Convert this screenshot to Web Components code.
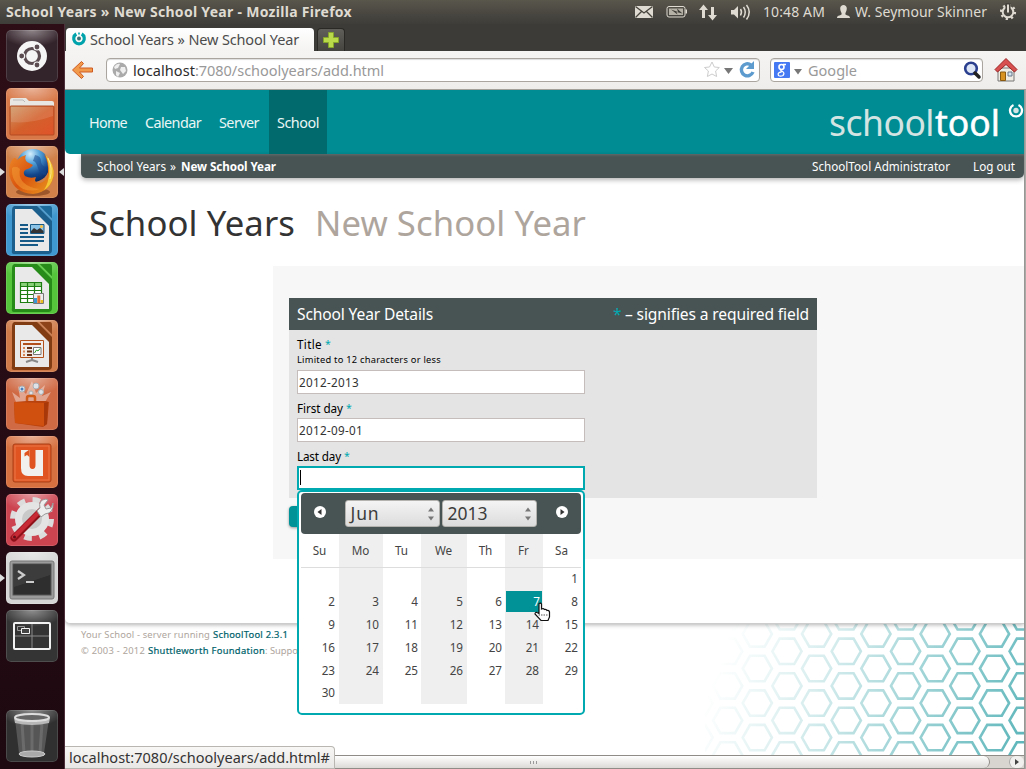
<!DOCTYPE html>
<html lang="en">
<head>
<meta charset="utf-8">
<title>School Years » New School Year</title>
<style>
html,body{margin:0;padding:0}
body{width:1026px;height:769px;overflow:hidden;background:#fff;font-family:"Noto Sans","Open Sans",sans-serif}
</style>
</head>
<body>
<desktop-shell>
  <top-panel slot="panel"></top-panel>
  <app-launcher slot="launcher"></app-launcher>
  <browser-window slot="window">
    <school-page></school-page>
  </browser-window>
</desktop-shell>
<script>
const define = (name, html, init) => {
  const t = document.createElement('template');
  t.innerHTML = html;
  customElements.define(name, class extends HTMLElement {
    connectedCallback() {
      if (this.shadowRoot) return;
      this.attachShadow({mode: 'open'}).appendChild(t.content.cloneNode(true));
      if (init) init.call(this, this.shadowRoot);
    }
  });
};

/* Text run that spreads its letters over a given width. */
define('fit-text', `<style>:host{display:inline-block;white-space:pre;flex:none}span{display:inline-block}</style><span><slot></slot></span>`,
function (root) {
  const w = +this.getAttribute('w'), span = root.querySelector('span');
  const nat = span.getBoundingClientRect().width;
  span.style.letterSpacing = ((w - nat) / Math.max(1, this.textContent.length)) + 'px';
  this.style.width = w + 'px';
});

define('desktop-shell', `<style>
:host{display:grid;grid-template:24px 745px/65px 961px;width:1026px;height:769px;overflow:hidden}
slot[name=panel]{display:block;grid-column:1/3}
slot{display:block;min-width:0;min-height:0}
</style><slot name="panel"></slot><slot name="launcher"></slot><slot name="window"></slot>`);

define('top-panel', `<style>
:host{display:flex;box-sizing:border-box;height:24px;align-items:center;padding-left:6px;background:linear-gradient(#59574c,#4a4841 50%,#3f3d39);color:#dfdbd2;font-size:14px;line-height:24px}
b{margin-right:283px}svg{flex:none;display:block}
</style>
<b><fit-text w="346">School Years » New School Year - Mozilla Firefox</fit-text></b>
<svg width="128" height="24" viewBox="635 0 128 24" fill="#dfdbd2">
<path d="M635 6h18v12h-18z"/><path d="M635.5 6.5l8.500 6.500 8.500-6.500M635.5 17.500l6-6M652.500 17.500l-6-6" fill="none" stroke="#45433c" stroke-width="1.300"/>
<rect x="667" y="6.500" width="18" height="10.500" rx="2" fill="none" stroke="#dfdbd2"/><rect x="669" y="8.500" width="14" height="6.500" fill="#b5b1a7"/><path d="M685.500 9.500h1.500v4h-1.500z"/><path d="M671 9.500l7 2.500-1-3.500 5.500 5-6-1.500 1 2.500z" fill="#3d3b36"/>
<path d="M703.500 4.500l4.500 5.500h-3v8h-3v-8h-3zM712.500 20.500l4.500-5.500h-3V7h-3v8h-3z"/>
<path d="M731 10h3l4-4v12.500l-4-4h-3z"/><path d="M740.500 9q2 3 0 6.500M743.500 7q3.500 5 0 10.500M746.500 5q5.500 7 0 14.500" fill="none" stroke="#dfdbd2" stroke-width="1.500"/>
</svg>
<fit-text w="62">10:48 AM</fit-text>
<svg style="margin:0 5px 0 12px" width="13" height="24" viewBox="0 0 13 24" fill="#dfdbd2"><path d="M3.200 8.500C3 3.800 10 3.800 9.800 8.500 9.800 11 8.500 12 8.300 14c0 1.500 4.700 1 4.700 4H0c0-3 4.700-2.500 4.700-4C4.500 12 3.200 11 3.200 8.500z"/></svg>
<fit-text w="132">W. Seymour Skinner</fit-text>
<svg style="margin-left:13px" width="18" height="24" viewBox="0 0 18 24" fill="none" stroke="#dfdbd2"><circle cx="8" cy="12" r="5.300" stroke-width="2"/><circle cx="8" cy="12" r="7" stroke-width="2.200" stroke-dasharray="2.200 3.300"/><path d="M8 3v9" stroke="#45433c" stroke-width="5"/><path d="M8 4.500v8" stroke-width="2"/></svg>`);

define('launcher-tile', `<style>
:host{display:block;position:relative;width:52px;height:52px;border-radius:5px;box-sizing:border-box;box-shadow:inset 0 0 0 1px rgba(255,255,255,.13);background-image:radial-gradient(ellipse 32px 17px at 50% 0,rgba(255,255,255,.45),rgba(255,255,255,0));flex:none}
i{display:none;position:absolute;top:22px;border:4px solid transparent}
:host([running]) .l{display:block;left:-6px;border-left:5px solid #ddd;border-right:0}
:host([active]) .r{display:block;right:-6px;border-right:5px solid #ddd;border-left:0}
</style><slot></slot><i class="l"></i><i class="r"></i>`);

define('app-launcher', `<style>
:host{display:flex;flex-direction:column;gap:6px;width:65px;height:745px;box-sizing:border-box;padding:6px 0 0 6px;background:linear-gradient(#2d0e17,#250b14 60%,#1e0910);border-right:1px solid #4c2f3b}
svg{display:block;width:52px;height:52px}
.trash{margin-top:42px}
</style>
<launcher-tile style="background-color:#33232a"><svg viewBox="0 0 52 52"><circle cx="26" cy="26" r="15" fill="#f5f5f5"/><circle cx="26" cy="26" r="7.500" fill="none" stroke="#5a4b50" stroke-width="3.200"/><g stroke="#f5f5f5" stroke-width="1.200" fill="#5a4b50"><circle cx="15.700" cy="26" r="3"/><circle cx="31" cy="17" r="3"/><circle cx="31" cy="35" r="3"/></g></svg></launcher-tile>
<launcher-tile style="background-color:#d87848"><svg viewBox="0 0 52 52"><defs><linearGradient id="f" x1="0" y1="0" x2="1" y2="1"><stop stop-color="#cf9a68"/><stop offset=".5" stop-color="#d3602c"/><stop offset="1" stop-color="#e0532a"/></linearGradient></defs><path d="M4 18v-6q0-2 2-2h14l3 3h23q2 0 2 2v3z" fill="#e9e7e3"/><path d="M7 12h10l2 2" stroke="#bbb" fill="none"/><rect x="4" y="18" width="44" height="29" rx="1" fill="url(#f)" stroke="#b34b22"/><path d="M5 19h42v9Q25 36 5 34z" fill="#fff" opacity=".12"/></svg></launcher-tile>
<launcher-tile running active style="background-color:#d08048"><svg viewBox="0 0 52 52"><defs><radialGradient id="g" cx=".42" cy=".15" r=".85"><stop stop-color="#d5effc"/><stop offset=".35" stop-color="#4f9fd8"/><stop offset=".75" stop-color="#13468c"/><stop offset="1" stop-color="#0b2a62"/></radialGradient><linearGradient id="x" x1="0" y1="0" x2="1" y2=".8"><stop stop-color="#ee8a28"/><stop offset=".5" stop-color="#d9540f"/><stop offset="1" stop-color="#e8911e"/></linearGradient></defs><ellipse cx="27" cy="46" rx="17" ry="4" fill="#7a3b18" opacity=".6"/><circle cx="27" cy="19.500" r="16.500" fill="url(#g)"/><path d="M29 9q6 1 6 6t5 6v8q-6 0-8-7t-5-7z" fill="#16468a" opacity=".55"/><path d="M6 14Q9 10 11 14 15 10 20 9 18 13 21 16L27 19Q25 22 20 23.500 16 26 19 30 24 33 30 31 27 37 34 37 41 35 42 27 43 17 38 8 48 17 48 29 45 46 27 48 8 47 3.500 30 2 20 6 14z" fill="url(#x)"/><path d="M39 8Q49 19 47.500 30 45 40 38 44 43 36 43 27 43 16 39 8z" fill="#f3c535"/><path d="M42 12q5 10 2 21" stroke="#fbe68a" fill="none"/><path d="M6 22Q5 36 17 43 26 46 34 43 23 42 17 36 12 30 14 23 10 19 6 22z" fill="#f39a35" opacity=".55"/></svg></launcher-tile>
<launcher-tile style="background-color:#3f98cf"><svg viewBox="0 0 52 52"><path d="M8 2h34q4 1 4 6v38q0 4-4 4H8q-3 0-2-4V6q0-3 2-4z" fill="#1c5e8c"/><path d="M9 5h17l17 17v25H9z" fill="#e9e9e9"/><path d="M31 2h3l12 12v3z" fill="#63b1df" opacity=".75"/><path d="M34 2h10q2 0 2 3v9z" fill="#1c6a9c"/><path d="M14 21h8M14 25h8M14 29h8M14 33h24M14 37h24M14 41h18" stroke="#175a88" stroke-width="2"/><path d="M24.500 20.500h13.500v9h-13.500z" fill="#8bc4e6" stroke="#175a88"/><path d="M25 29v-2l3-3 3 2 3-2 3.500 3v2z" fill="#333"/><circle cx="35.500" cy="22.500" r="1.500" fill="#ffc13d"/></svg></launcher-tile>
<launcher-tile style="background-color:#55c53c"><svg viewBox="0 0 52 52"><path d="M8 2h34q4 1 4 6v38q0 4-4 4H8q-3 0-2-4V6q0-3 2-4z" fill="#268b18"/><path d="M9 5h17l17 17v25H9z" fill="#e9e9e9"/><path d="M31 2h3l12 12v3z" fill="#7be060" opacity=".75"/><path d="M34 2h10q2 0 2 3v9z" fill="#268b18"/><path d="M14.500 20.500h21v20h-21z" fill="#fff"/><path d="M14 20h22v4H14z" fill="#8ad07b"/><path d="M14.500 20.500h21v20h-21zM14 24.500h22M14 28.500h22M14 32.500h22M14 36.500h22M21.500 20v20M28.500 20v20" fill="none" stroke="#1d7d13" stroke-width="1.200"/><path d="M27.500 31.500h10v10h-10z" fill="#eee" stroke="#777"/><path d="M28 36h3v5h-3z" fill="#3898d4"/><path d="M31.300 33.500h3V41h-3z" fill="#e07030"/><path d="M34.600 38h2.500v3h-2.500z" fill="#e8c020"/></svg></launcher-tile>
<launcher-tile style="background-color:#cf7a48"><svg viewBox="0 0 52 52"><path d="M8 2h34q4 1 4 6v38q0 4-4 4H8q-3 0-2-4V6q0-3 2-4z" fill="#823c14"/><path d="M9 5h17l17 17v25H9z" fill="#e9e9e9"/><path d="M31 2h3l12 12v3z" fill="#dd9468" opacity=".75"/><path d="M34 2h10q2 0 2 3v9z" fill="#8e4418"/><path d="M14.500 20.500h23v17h-23z" fill="#f2ece8" stroke="#b2501c"/><path d="M17 24h18" stroke="#b2501c" stroke-width="2"/><path d="M17 28h2M17 31.500h2M17 35h2" stroke="#d88858" stroke-width="2"/><path d="M21 28h5M21 31.500h5M21 35h5" stroke="#6b3213" stroke-width="2"/><path d="M27.500 27.500h7.500v7h-7.500z" fill="#fff" stroke="#777"/><path d="M28.500 33l2-3 1.500 1 2-2.500" stroke="#2a9a2a" fill="none"/><path d="M26 38v2l-6 2M26 40l6 2" stroke="#888" stroke-width="2" fill="none"/></svg></launcher-tile>
<launcher-tile style="background-color:#cf6a45"><svg viewBox="0 0 52 52"><path d="M10 24L6 14l8 6-2-12 8 8 6-13 4 12 9-8-3 11 9-4-6 10z" fill="#fff" opacity=".4"/><g fill="#dfe3e8" stroke="#a9b0b5"><circle cx="16" cy="11" r="3"/><circle cx="30" cy="8" r="3"/><circle cx="35" cy="14" r="2.500"/><circle cx="25" cy="15" r="2"/></g><circle cx="16" cy="11" r="1.500" fill="#4a7fc0"/><path d="M8 24l13-1h19l3 1-2 22-4 3-28-4z" fill="#b8420e"/><path d="M8 24l30 1v23L9 45z" fill="#d0500f"/><path d="M38 25l4-1-1 22-3 2z" fill="#a8380a"/><path d="M21 23v-3q0-2 2-2h4q2 0 2 2v3" fill="none" stroke="#d05a18" stroke-width="2.500"/></svg></launcher-tile>
<launcher-tile style="background-color:#d77040"><svg viewBox="0 0 52 52"><rect x="7" y="8" width="38" height="38" rx="2" fill="#df5420" stroke="#a84018"/><rect x="9" y="10" width="34" height="34" fill="none" stroke="#eb7748"/><path d="M15 14h8.500v15q0 4 3 4t3-4V14H37v26H22q-7 0-7-8z" fill="#f2f0ee"/><path d="M18.500 17l5-3.500V21l-2.500-2-2.500 1.500z" fill="#df5420"/></svg></launcher-tile>
<launcher-tile style="background-color:#cc4450"><svg viewBox="0 0 52 52"><circle cx="26" cy="25" r="19" fill="none" stroke="#dcdcdc" stroke-width="6" stroke-dasharray="7.460 7.460"/><circle cx="26" cy="25" r="13.500" fill="#c9c9c9" stroke="#e4e4e4" stroke-width="7"/><path d="M8 44L35 17" stroke="#8e1019" stroke-width="7" stroke-linecap="round"/><path d="M8 43L34 17" stroke="#c82a35" stroke-width="4.500" stroke-linecap="round"/><path d="M31 17l3-3q-2-8 6-9l2 1-4 5 2 4 5-1 2-5q1 10-8 11l-4 3z" fill="#eee" stroke="#999"/><circle cx="8.500" cy="43" r="1.500" fill="#601018"/></svg></launcher-tile>
<launcher-tile running style="background-color:#d5d5d5"><svg viewBox="0 0 52 52"><rect x="4" y="9" width="44" height="38" rx="2" fill="#9b9b9b" stroke="#777"/><rect x="7" y="12" width="38" height="31" fill="#2e2e2e" stroke="#555"/><path d="M8 13h36v10L8 35z" fill="#fff" opacity=".07"/><path d="M12 19l6 4-6 4M20 30h8" fill="none" stroke="#ccc" stroke-width="2.200"/></svg></launcher-tile>
<launcher-tile style="background-color:#343434"><svg viewBox="0 0 52 52"><path d="M26 13v26M8 26h36" stroke="#8a8a8a"/><rect x="8" y="13" width="36" height="26" rx="1" fill="none" stroke="#f2f2f2" stroke-width="2"/><path d="M11.500 16.500h7v4h-7z" fill="none" stroke="#999"/><path d="M15.500 18.500h8v5h-8z" fill="#444" stroke="#f2f2f2"/></svg></launcher-tile>
<launcher-tile class="trash" style="background-color:#303030"><svg viewBox="0 0 52 52"><path d="M9 9l4 34q13 8 25 0l5-34z" fill="#777" opacity=".55"/><path d="M16 13l2 30M26 14v31M36 13l-2 30" stroke="#aaa" opacity=".25" stroke-width="3"/><ellipse cx="26" cy="44" rx="13" ry="3" fill="#aaa" stroke="#ccc"/><path d="M8 8l1 5q17 4 34 0l1-5q-18 8-36 0z" fill="#b8b8b8"/><ellipse cx="26" cy="7.500" rx="17" ry="3.500" fill="#666" stroke="#ddd" stroke-width="2"/></svg></launcher-tile>`);

define('browser-window', `<style>
:host{display:grid;grid-template:27px 39px 665px 14px/959px 2px;width:961px;height:745px;position:relative;color:#3c3c3c;font-size:14.500px}
.tabs,.tool{grid-column:1/3}
svg{flex:none;display:block}
.tabs{background:#3c3b37;display:flex;align-items:flex-end;padding-left:1px;gap:3px}
.tab{display:flex;align-items:center;gap:3px;width:243px;height:23px;padding-left:5px;border-radius:4px 4px 0 0;background:linear-gradient(#fff,#f4f3f1);color:#4c4c4c}
.tab fit-text{position:relative;top:-1px}
.plus{width:26px;height:22px;border:1px solid #2a2926;border-bottom:0;border-radius:4px 4px 0 0;background:linear-gradient(#605f59,#45443f)}
.tool{display:flex;box-sizing:border-box;background:linear-gradient(#f5f4f2,#efedeb);border-bottom:1px solid #a39f99;padding:7px 0 0 6px;align-items:flex-start}
.box{box-sizing:border-box;height:24px;background:#fff;border:1px solid #aaa69f;border-radius:4px;display:flex;align-items:center;box-shadow:inset 0 1px 1px #ddd}
.edge{background:linear-gradient(90deg,#8e8e8e,#b4b2ae)}
main{overflow:hidden;position:relative;background:#fff}
.scroll{box-sizing:border-box;background:#d8d5d1;border-top:1px solid #8f8c88;border-bottom:1px solid #8f8c88;display:flex;position:relative;align-items:center}
.thumb{width:925px;height:12px;box-sizing:border-box;padding-left:12px;border-right:1px solid #8f8c88;border-radius:0 6px 6px 0;background:linear-gradient(#fff,#dcdad7);display:flex;align-items:center;justify-content:center}
.end{margin-left:19px;flex:1;height:12px;display:flex;align-items:center;justify-content:center;background:#f1f0ee;border-left:1px solid #aaa;border-radius:6px;box-sizing:border-box}
.status{position:absolute;left:0;bottom:0;width:270px;height:23px;box-sizing:border-box;padding-left:4px;line-height:21px;border:1px solid #b9b6b2;border-left:0;border-radius:0 4px 0 0;background:linear-gradient(#f8f7f6,#e9e7e5);color:#333}
</style>
<div class="tabs"><div class="tab"><svg width="16" height="20" viewBox="0 0 16 20"><path d="M5.300 4A5.300 5.300 0 1 0 10.700 4" fill="none" stroke="#00a3ab" stroke-width="3.200"/><path d="M8 2.500v2" stroke="#00a3ab" stroke-width="1.600"/><circle cx="8" cy="8.600" r="2" fill="#3f6f75"/></svg><fit-text w="209">School Years » New School Year</fit-text></div>
<div class="plus"><svg width="26" height="22"><path d="M10.500 3.500h5v5h5v5h-5v5h-5v-5h-5v-5h5z" fill="#b9d94a" stroke="#86a52b"/></svg></div></div>
<div class="tool">
<svg style="margin-top:2px" width="24" height="22" viewBox="0 0 24 22"><path d="M1.500 10l9-8.500 2 2-4 4.500h13v4h-13l4 4.500-2 2z" fill="#f29a4c" stroke="#cf5a20" stroke-linejoin="round"/></svg>
<div class="box" style="width:654px;margin-left:11px;padding-left:5px;color:#999">
<svg width="16" height="16" style="margin-right:5px"><circle cx="8" cy="8" r="7.500" fill="#aaa"/><path d="M2 5q3-4 6-3l-2 4-3 1zM9 5l4 0 1 4-3 3-3-4zM4 9l4 2-2 4-2-2z" fill="#eee"/></svg>
<fit-text w="62" style="color:#2c2c2c">localhost</fit-text><fit-text w="189">:7080/schoolyears/add.html</fit-text>
<svg style="margin-left:317px" width="60" height="22" viewBox="0 0 60 22"><path d="M11 3l2.300 5 5 .500-3.700 3.500 1 5.500L11 15l-4.600 2.500 1-5.500L3.500 8.500l5-.500z" fill="#fff" stroke="#ccc"/><path d="M23 9h9l-4.500 6z" fill="#777"/><path d="M50 6A6 6 0 1 0 52 13" fill="none" stroke="#5d9bcf" stroke-width="3.400"/><path d="M53 2v8h-8z" fill="#5d9bcf"/></svg></div>
<div class="box" style="width:213px;margin-left:10px;padding-left:3px;color:#9a9a9a">
<svg width="30" height="18" style="margin-right:4px"><rect y="1" width="16" height="16" rx="1" fill="#4579f4"/><g fill="none" stroke="#fff"><circle cx="7.500" cy="6" r="2.500" stroke-width="1.600"/><path d="M9 3.500h3M6.500 8.500q0 1.500 2 2 2.500 1.500.500 4-2.500 1.300-4.500 0-1.500-3 3-3.500" stroke-width="1.300"/></g><path d="M20 8h8l-4 5.500z" fill="#777"/></svg>
<fit-text w="49">Google</fit-text>
<svg style="margin-left:105px" width="20" height="20"><circle cx="9" cy="8.500" r="5.800" fill="#dbe5f5" stroke="#2b3f8f" stroke-width="2.600"/><path d="M13 13l4 4" stroke="#222" stroke-width="3.500" stroke-linecap="round"/></svg></div>
<svg style="margin-left:11px" width="24" height="24"><path d="M4 10h16v13H4z" fill="#f0ece4" stroke="#777"/><path d="M6.500 14h5v8.500h-5z" fill="#d89220" stroke="#8a5a10"/><path d="M14 14h4v4h-4z" fill="#d5e5ef" stroke="#678"/><path d="M12 .500l11 11-2.500 2.500L12 6.500 3.500 14 1 11.500z" fill="#d95050" stroke="#9a2222"/></svg>
</div>
<main><slot></slot></main><div class="edge"></div>
<div class="scroll"><div class="thumb"><svg width="9" height="3"><path d="M1.500 0v3M4.500 0v3M7.500 0v3" stroke="#999"/></svg></div><div class="end"><svg width="6" height="8"><path d="M1 1v6l4-3z" fill="#444"/></svg></div></div><div class="edge"></div>
<div class="status"><fit-text w="261">localhost:7080/schoolyears/add.html#</fit-text></div>`);

define('school-page', `<style>
:host{display:block;width:959px;height:665px;position:relative;overflow:hidden;background:#fff;font-size:12px}
.sheet{position:relative;height:534px;background:#fff;border-bottom:1px solid #ccc;border-radius:0 0 0 5px;box-shadow:0 1px 4px rgba(0,0,0,.3);box-sizing:border-box}
h1{margin:0;padding:21px 0 0 24px;height:67px;font-size:34.700px;line-height:48px;font-weight:400;color:#333;display:flex;gap:20px}
h1 .s{color:#aea59d}
.area{margin-left:208px;height:293px;background:#f7f7f7;padding:32px 16px 0;box-sizing:border-box}
.btn{width:60px;height:21px;margin-top:8px;border-radius:4px;background:#009296;box-shadow:0 1px 3px rgba(0,0,0,.4)}
date-picker{position:absolute;left:232px;top:400px;z-index:3}
</style>
<div class="sheet"><site-header></site-header><crumb-bar></crumb-bar>
<h1><fit-text w="206">School Years</fit-text><fit-text class="s" w="271">New School Year</fit-text></h1>
<div class="area"><year-form></year-form><div class="btn"></div></div></div>
<page-footer></page-footer><date-picker></date-picker>`);

define('site-header', `<style>
:host{display:flex;box-sizing:border-box;height:64px;padding-left:16px;background:#008c93;border-radius:0 0 0 5px;color:#e9f6f5;font-size:14.400px;line-height:66px}
nav{display:flex;width:751px}
nav a{padding:0 8px;margin-right:2px}
nav a.on{background:#006a6d}
.logo{font-size:35.500px;display:flex;line-height:65px;gap:1px;color:#d3e4e2}
.logo b{font-weight:400;color:#fff;-webkit-text-stroke:.5px #fff}
svg{margin:12px 0 0 8px;flex:none}
</style><nav><a><fit-text w="38">Home</fit-text></a><a><fit-text w="56">Calendar</fit-text></a><a><fit-text w="40">Server</fit-text></a><a class="on"><fit-text w="42">School</fit-text></a></nav>
<div class="logo"><fit-text w="105">school</fit-text><b><fit-text w="65">tool</fit-text></b></div>
<svg width="16" height="17" viewBox="0 0 16 17"><path d="M5.500 3A6 6 0 1 0 10.500 3" fill="none" stroke="#fff" stroke-width="2.300"/><circle cx="8" cy="8.500" r="2.700" fill="#d3e4e2"/></svg>`);

define('crumb-bar', `<style>
:host{display:flex;margin-left:16px;height:24px;box-sizing:border-box;padding:0 9px 0 16px;background:#485454;border-radius:0 0 5px 5px;box-shadow:0 2px 5px rgba(0,0,0,.3),inset 0 2px 3px -1px rgba(255,255,255,.15);color:#fff;font-size:11.700px;line-height:24px}
.r{margin-left:auto;display:flex;gap:23px}
</style><fit-text w="69">School Years</fit-text><fit-text w="7" style="margin:0 4px">»</fit-text><b><fit-text w="95">New School Year</fit-text></b>
<div class="r"><fit-text w="138">SchoolTool Administrator</fit-text><fit-text w="42">Log out</fit-text></div>`);

define('form-field', `<style>
:host{display:block;color:#000;font-size:11.700px}
label{display:flex;gap:3px;line-height:16px;height:16px}
em{color:#00a9b0;font-style:normal;font-size:10.500px}
.in{box-sizing:border-box;width:288px;height:24px;border:1px solid #c5bcbc;background:#fff;padding-left:1px;line-height:23px;color:#333}
:host([focus]) .in{border:2px solid #00a9b0;padding:2px 0 0 1px}
:host([focus]) .in::before{content:"";display:block;width:1px;height:15px;background:#000}
:host([tight]) label{line-height:13px}
</style><label><slot name="label"></slot><em>*</em></label><slot name="hint"></slot><div class="in"><slot></slot></div>`);

define('year-form', `<style>
:host{display:block;width:528px;height:200px;background:#e4e4e4}
header{display:flex;justify-content:space-between;height:32px;padding:0 8px;background:#485454;color:#fff;font-size:15.600px;line-height:32px}
i{font-style:normal;color:#00a9b0}
.f{display:flex;flex-direction:column;gap:8px;padding:6px 8px}
.hint{display:block;height:18px;font-size:9.300px;line-height:15px}
</style><header><fit-text w="136">School Year Details</fit-text><span><i><fit-text w="12">*</fit-text></i><fit-text w="184">– signifies a required field</fit-text></span></header>
<div class="f">
<form-field><fit-text slot="label" w="25">Title</fit-text><fit-text slot="hint" class="hint" w="144">Limited to 12 characters or less</fit-text><fit-text w="60">2012-2013</fit-text></form-field>
<form-field tight><fit-text slot="label" w="46">First day</fit-text><fit-text w="64">2012-09-01</fit-text></form-field>
<form-field tight focus><fit-text slot="label" w="44">Last day</fit-text></form-field>
</div>`);

define('date-picker', `<style>
:host{display:block;box-sizing:border-box;width:288px;height:225px;border:2px solid #00a9b0;border-radius:5px;background:#fff;padding:1px 2px;color:#444;font-size:11.700px}
header{display:flex;align-items:center;justify-content:space-between;height:41px;box-sizing:border-box;padding:0 12px;border-radius:4px;background:#485454}
header>svg{margin-top:-2px}
.sel{display:flex;gap:2px;margin-right:1px}
.sel div{box-sizing:border-box;width:95px;height:27px;padding:0 4px 0 5px;border:1px solid #b5b3b0;border-radius:3px;background:linear-gradient(#f4f4f4,#dcdcdc);display:flex;align-items:center;justify-content:space-between;font-size:17.500px;line-height:25px;color:#3c3c3c}
.grid{display:grid;grid-template-columns:38px 44px 38px 46px 38px 38px 38px;grid-template-rows:34px repeat(5,23px) 21px}
.grid span{display:block;line-height:20px;text-align:right;padding-right:3px}
.grid span.alt{padding-right:4px}
.grid span:nth-child(7n+1){padding-right:4px}
.grid .h,.grid .h.alt,.grid .h:nth-child(1){text-align:center;padding:0 1px 0 0;line-height:32px;border-bottom:1px solid #ddd;box-sizing:border-box}
.grid .last{line-height:18px}
.grid .today,.grid .today.alt{background:#009296;color:#fff;border:solid #efefef;border-width:0 1px 2px;padding-right:2px}
.alt{background:#efefef}
.cur{position:absolute;left:235px;top:110px}
</style><header><svg width="14" height="14"><circle cx="7" cy="6" r="6" fill="#fff"/><path d="M8.500 3v6l-4-3z" fill="#333"/></svg>
<div class="sel"><div><fit-text w="29">Jun</fit-text><svg width="8" height="16"><path d="M1 5.500h6l-3-4zM1 10.500h6l-3 4z" fill="#777"/></svg></div><div><fit-text w="40">2013</fit-text><svg width="8" height="16"><path d="M1 5.500h6l-3-4zM1 10.500h6l-3 4z" fill="#777"/></svg></div></div>
<svg width="14" height="14"><circle cx="7" cy="6" r="6" fill="#fff"/><path d="M5.500 3v6l4-3z" fill="#333"/></svg></header>
<div class="grid"></div>
<svg class="cur" width="18" height="20" viewBox="0 0 18 20"><path d="M5 1.500q1.500-1 2.500.500V7q2-1 3 .500 2-.500 2.500 1 2-.500 2.500 1.500v5l-1.500 3.500H7L1 12q0-2 2-1.500l2 1z" fill="#fff" stroke="#111" stroke-width="1.200"/><path d="M4.500 13h9" stroke="#555" stroke-dasharray="1.500 1"/></svg>`,
function (root) {
  const grid = root.querySelector('.grid');
  const cell = (text, col, extra) => {
    const s = document.createElement('span');
    s.textContent = text;
    s.className = (col % 2 ? 'alt ' : '') + extra;
    grid.appendChild(s);
  };
  ['Su', 'Mo', 'Tu', 'We', 'Th', 'Fr', 'Sa'].forEach((d, i) => cell(d, i, 'h'));
  for (let i = 0; i < 42; i++) {
    const day = i - 5;
    cell(day > 0 && day <= 30 ? day : '', i % 7, day === 7 ? 'today' : day === 30 ? 'last' : '');
  }
});

define('page-footer', `<style>
:host{display:flex;justify-content:space-between;height:131px;font-size:9.400px;line-height:16px;color:#aea59d}
.t{padding:3px 0 0 16px}
.t div{display:flex}
a{margin-left:3px;color:#00626b;-webkit-text-stroke:.2px #00626b}
</style><div class="t"><div><fit-text w="129">Your School - server running</fit-text><a><fit-text w="75">SchoolTool 2.3.1</fit-text></a></div>
<div><fit-text w="64">© 2003 - 2012</fit-text><a><fit-text w="117">Shuttleworth Foundation</fit-text></a><fit-text w="33">: Suppo</fit-text></div></div>
<svg width="319" height="131" viewBox="705 624 319 131"><defs><linearGradient id="h" gradientUnits="userSpaceOnUse" x1="722" y1="650" x2="1030" y2="760"><stop stop-color="#008c93" stop-opacity="0"/><stop offset=".3" stop-color="#008c93" stop-opacity=".15"/><stop offset="1" stop-color="#008c93" stop-opacity=".66"/></linearGradient></defs><path fill="none" stroke="url(#h)" stroke-width="2.600"/></svg>`,
function (root) {
  let d = '';
  for (let c = 0; c < 12; c++) {
    const cx = 698 + c * 29.65;
    for (let r = 0; r < 6; r++) {
      const cy = (c % 2 ? 616.8 : 599.4) + r * 34.55;
      d += `M${cx - 14.6} ${cy}l7.300-12.700h14.600l7.300 12.700-7.300 12.700h-14.600z`;
    }
  }
  root.querySelector('path').setAttribute('d', d);
});
</script>
</body>
</html>
